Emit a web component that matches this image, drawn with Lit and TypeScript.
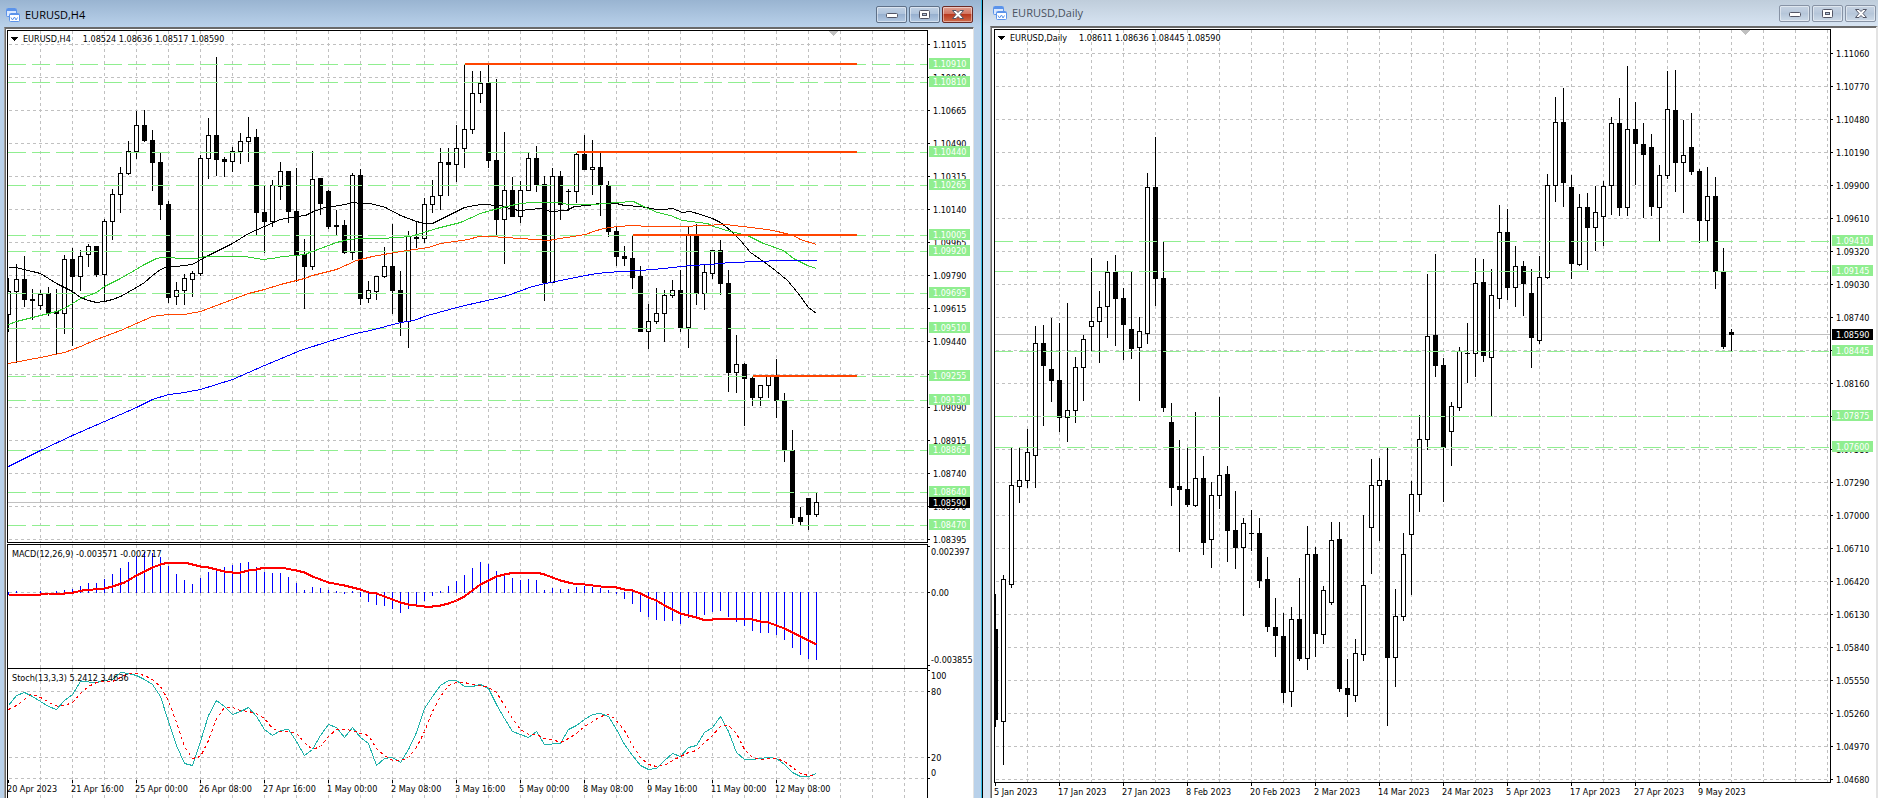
import { LitElement, html, svg, css } from "lit";
import { customElement, property } from "lit/decorators.js";

type Point = [number, number];

interface AxisLabel {
  y: number;
  text: string;
  tick?: number;
}

interface Trend {
  points: Point[];
  color: string;
  width?: number;
  dash?: string;
}

interface Pane {
  name: string;
  title?: string;
  height?: number;
  top: number;
  grid: number[];
  gridLabels: AxisLabel[];
  labelX: number;
  candles?: number[][];
  bars?: number[];
  zero?: number;
  trends?: Trend[];
  levels?: AxisLabel[];
  rays?: Point[];
  rayEnd?: number;
  price?: AxisLabel;
}

interface Chart {
  symbol: string;
  quote: string;
  active: boolean;
  left: number;
  shift: number;
  panes: Pane[];
  dates: string[];
}

const parse = (text: string): number[][] =>
  text
    .trim()
    .split(/\s*;\s*/)
    .filter(Boolean)
    .map((row) => row.split(/[\s,]+/).map(Number));

const points = (text: string): Point[] =>
  text
    .trim()
    .split(/\s+/)
    .map((pair) => pair.split(",").map(Number) as Point);

const series = (start: number, step: number, count: number): number[] =>
  Array.from({ length: count }, (_, i) => start + i * step);

const scale = (first: number, step: number, top: number, count: number): AxisLabel[] =>
  series(0, 1, count).map((i) => ({ y: top + i * 33, text: ((first - i * step) / 100000).toFixed(5) }));

/* Each candle: high, body top, body bottom, low, 1 when it closed up. */
const H4_CANDLES = parse(`
278 291 314 331 1; 264 279 291 362 1; 256 279 299 306 0; 289 299 300 319 0; 290 294 305 309 1;
287 293 313 315 0; 289 311 313 353 0; 255 259 313 333 1; 248 259 276 345 0; 250 256 276 290 1;
244 246 254 266 1; 246 246 274 276 0; 219 221 274 301 1; 189 194 221 239 1; 167 173 194 212 1;
141 151 173 174 1; 111 125 151 158 1; 110 125 140 141 0; 130 140 162 190 0; 153 162 204 219 0;
201 204 297 302 0; 282 290 296 304 1; 274 278 290 304 1; 271 273 279 296 1; 155 158 273 275 1;
118 135 158 178 1; 57 135 159 175 0; 157 159 161 176 0; 147 151 161 171 1; 133 141 151 163 1;
117 137 141 161 1; 129 137 212 234 0; 186 212 221 252 0; 180 185 221 226 1; 162 171 186 199 1;
171 171 211 222 0; 168 211 255 281 0; 239 254 266 308 0; 151 179 266 269 1; 178 178 203 214 0;
190 191 226 228 0; 210 225 226 234 0; 220 225 252 253 0; 173 175 252 259 1; 169 175 298 304 0;
281 290 298 302 1; 276 276 291 299 1; 247 266 276 277 1; 224 266 290 313 0; 271 290 321 335 0;
231 236 321 347 1; 222 237 238 247 0; 198 204 238 242 1; 180 196 204 212 1; 148 162 195 209 1;
148 162 164 195 0; 125 148 164 181 1; 64 129 148 167 1; 71 93 129 133 1; 71 83 93 102 1;
65 83 160 167 0; 79 160 219 234 0; 132 190 219 263 1; 177 190 216 216 0; 181 190 216 222 1;
153 158 190 190 1; 146 158 184 191 0; 176 184 282 300 0; 168 176 282 282 1; 171 176 204 219 0;
189 191 191 210 0; 152 154 191 202 1; 135 154 169 169 0; 140 167 169 194 1; 153 167 184 215 0;
181 185 231 236 0; 227 231 256 265 0; 246 256 258 265 0; 235 258 277 288 0; 266 276 331 331 0;
304 321 331 348 1; 288 313 321 323 1; 290 295 313 341 1; 280 290 295 297 1; 270 290 327 331 0;
226 235 327 347 1; 224 235 293 304 0; 264 272 293 309 1; 250 250 273 278 1; 240 250 283 294 0;
270 283 372 391 0; 335 364 372 392 1; 363 364 378 425 0; 377 378 397 405 0; 385 385 397 405 1;
376 376 385 397 1; 359 376 400 417 0; 393 400 450 461 0; 430 450 517 523 0; 507 517 521 524 0;
498 498 514 529 0; 492 502 514 516 1;`);

const DAILY_CANDLES = parse(`
594 629 719 726 0; 575 579 721 764 1; 447 485 584 587 1; 447 480 486 502 1; 429 452 480 487 1;
326 343 455 487 1; 325 343 365 425 0; 318 369 380 401 0; 323 380 417 431 0; 303 410 417 441 1;
357 367 410 422 1; 335 339 367 400 1; 258 321 326 350 1; 291 307 321 362 1; 261 272 306 337 1;
255 272 298 345 0; 288 298 324 359 0; 272 329 348 358 0; 317 331 347 400 1; 173 187 333 343 1;
137 187 278 305 0; 242 278 407 411 0; 403 422 487 505 0; 440 486 489 551 0; 447 489 504 506 0;
412 478 505 506 1; 456 478 542 554 0; 482 495 539 567 1; 397 475 495 508 1; 466 474 530 561 0;
491 530 547 568 0; 518 523 547 615 1; 510 533 533 550 0; 518 533 580 587 0; 557 579 626 631 0;
598 627 635 656 0; 613 636 692 702 0; 607 619 691 706 1; 578 619 658 660 0; 526 554 658 669 1;
547 554 633 656 0; 586 590 634 643 1; 522 540 602 604 1; 522 539 688 691 0; 659 688 694 716 0;
639 653 695 701 1; 515 585 654 660 1; 459 485 527 573 1; 458 480 485 540 1; 447 480 657 725 0;
589 616 657 686 1; 533 554 616 620 1; 481 494 534 594 1; 415 439 494 511 1; 274 336 439 449 1;
254 335 365 376 0; 358 365 447 501 0; 402 406 431 465 1; 347 351 407 410 1; 323 353 353 382 0;
258 283 353 376 1; 259 282 355 361 0; 269 295 357 415 1; 205 232 298 308 1; 209 232 287 299 0;
246 266 287 306 1; 261 266 283 315 0; 269 293 337 367 0; 256 277 340 343 1; 174 185 277 278 1;
97 122 185 201 1; 88 122 182 206 0; 175 187 263 278 0; 194 207 264 265 1; 193 207 227 269 0;
186 212 227 250 1; 181 186 216 245 1; 117 123 185 214 1; 98 123 207 215 0; 66 129 207 215 1;
102 129 143 184 0; 123 144 154 217 0; 134 147 206 215 0; 165 175 207 240 1; 71 109 175 178 1;
70 110 162 191 0; 120 155 162 212 1; 113 147 171 174 0; 169 171 220 242 0; 167 196 220 240 1;
177 196 271 288 0; 248 272 346 348 0; 329 332 334 350 0;`);

const MACD_BARS = [
  -3, 1, 0, 0, 1, 0, 1, 2, 3, 6, 9, 9, 13, 18, 24, 30, 36, 40, 39, 35, 26, 18, 12, 8, 14, 20, 23, 25, 27, 29, 30,
  25, 20, 19, 19, 15, 9, 2, 5, 4, 2, 1, -2, 1, -5, -10, -13, -14, -17, -21, -17, -12, -9, -4, 1, 6, 11, 17, 24, 30,
  28, 21, 17, 14, 12, 13, 12, 2, 4, 3, 3, 5, 6, 5, 4, 2, -2, -7, -12, -20, -25, -28, -29, -29, -32, -26, -25, -23,
  -20, -19, -25, -30, -34, -39, -41, -41, -43, -48, -56, -63, -67, -68,
];

const MA_BLUE = points(`8,466 20,460 40,450 72,435 104,421 136,407 152,399 168,394 178,393 200,389 232,379 264,365
300,350 328,341 355,333 370,330 400,322 413,320 427,315 460,306 500,297 510,294 532,286 545,283 560,280 580,276
596,273 620,271 640,270 663,268 690,265 710,264 730,262 760,261 778,260 816,260`);

const MA_ORANGE = points(`8,363 24,360 40,357 64,352 80,346 96,339 120,330 136,323 152,316 168,314 184,314 200,311
216,305 232,299 248,293 264,289 280,284 296,280 304,278 312,275 336,269 356,260 372,256 400,251 428,247 440,243
468,239 478,236 490,236 520,238 548,240 566,237 585,234 593,231 603,228 617,226 633,225 647,226 683,226 703,225
725,224 742,226 767,229 777,231 793,235 800,239 816,244`);

const MA_GREEN = points(`8,324 16,321 24,319 40,315 56,311 64,308 80,298 96,292 104,286 120,278 134,270 144,264
156,258 162,257 168,257 180,258 196,258 205,256 245,256 262,259 272,258 282,256 296,255 304,254 320,248 336,242
348,239 360,238 380,238 398,237 410,236 420,233 436,228 460,222 480,213 490,210 506,206 520,203 532,202 560,202
567,204 593,204 617,202 633,201 643,206 657,212 670,215 682,220 707,223 713,226 730,231 747,235 763,243 783,250
793,258 807,265 816,268`);

const MA_BLACK = points(`8,267 16,267 23,269 32,271 40,273 48,278 56,283 64,287 72,291 80,297 88,300 96,302 104,301
112,299 120,296 136,287 144,282 152,275 160,269 165,267 176,266 192,264 204,257 216,251 232,243 248,233 264,226
280,219 296,216 305,215 313,211 324,207 332,206 345,204 352,202 360,203 370,203 385,207 400,215 416,221 424,223
432,223 448,215 464,207 480,204 500,205 512,209 520,210 540,208 550,211 566,210 574,206 588,205 598,203 616,203
624,205 640,206 656,209 664,209 672,208 682,212 690,211 700,214 712,218 720,222 730,230 740,240 750,252 763,261
775,270 787,280 797,292 808,307 816,313`);

const MACD_SIGNAL = points(`8,594 40,594 48,593 64,593 73,592 82,590 104,588 112,586 124,582 136,575 144,571 152,567
160,564 168,562 184,562 192,564 200,566 208,567 216,569 224,571 232,572 240,572 248,570 256,569 264,567 280,567
296,570 304,572 312,576 328,582 344,585 360,589 368,592 376,593 384,596 392,599 400,602 408,604 416,605 424,606
432,606 440,605 448,603 456,600 464,596 472,590 480,584 496,576 504,574 514,572 536,572 544,574 552,577 560,580
572,583 584,584 600,586 616,587 624,589 632,590 640,593 648,597 656,600 664,605 672,609 680,613 688,615 696,617
702,619 712,619 718,618 746,618 752,619 760,621 768,622 776,625 784,628 792,632 800,636 808,640 816,644`);

const STOCH_MAIN = points(`8,705 16,695 24,692 32,696 40,701 48,706 56,709 64,700 72,694 80,681 96,682 104,680 112,679
120,672 128,673 136,675 144,679 152,684 160,696 168,721 176,745 184,763 192,765 200,741 208,715 216,700 224,706
232,714 240,711 248,707 256,716 264,729 272,735 280,730 288,729 296,741 304,755 312,749 320,735 328,724 336,727
344,737 352,727 360,737 368,743 376,765 384,758 392,757 400,762 408,749 416,732 424,708 432,696 440,685 448,680
456,680 464,686 472,686 480,684 488,688 496,704 504,718 512,731 520,734 528,737 536,731 544,744 560,743 568,729
576,725 584,719 592,714 600,713 608,716 616,729 624,744 632,755 640,765 648,769 656,768 664,760 672,753 680,756
688,747 696,745 704,732 712,727 720,716 728,731 736,752 744,759 752,759 760,758 768,757 776,758 784,764 792,772
800,776 808,776 816,773`);

const STOCH_SIGNAL = points(`8,709 16,705 24,699 30,694 36,695 44,699 50,703 58,706 64,705 72,702 80,693 88,686 96,682
104,681 112,681 120,677 128,673 136,673 144,675 152,679 160,686 168,700 176,722 184,746 192,758 200,756 208,740
216,718 224,707 232,707 240,710 248,711 256,713 264,718 272,728 280,731 288,731 296,733 304,742 312,749 320,746
328,736 336,729 344,729 352,730 360,733 368,735 376,748 384,755 392,760 400,760 408,757 416,747 424,731 432,711
440,696 448,685 456,682 464,682 472,684 480,685 488,687 496,692 504,705 512,718 520,729 528,734 536,734 544,738
552,739 560,742 568,738 576,733 584,726 592,721 600,716 608,714 614,718 624,730 632,745 640,757 648,764 656,766
664,765 672,760 680,756 688,752 696,750 704,742 712,735 720,726 728,725 736,733 744,749 752,757 760,759 768,758
776,758 784,761 792,767 800,773 808,775 814,775`);

const H4_LEVELS: AxisLabel[] = [
  { y: 64, text: "1.10910" },
  { y: 82, text: "1.10810" },
  { y: 152, text: "1.10440" },
  { y: 185, text: "1.10265" },
  { y: 235, text: "1.10005" },
  { y: 251, text: "1.09920" },
  { y: 293, text: "1.09695" },
  { y: 328, text: "1.09510" },
  { y: 376, text: "1.09255" },
  { y: 400, text: "1.09130" },
  { y: 450, text: "1.08865" },
  { y: 492, text: "1.08640" },
  { y: 525, text: "1.08470" },
];

const H4_SCALE = scale(111015, 175, 44, 16).map((label, i) =>
  i < 14 ? label : { ...label, text: i === 14 ? "1.08570" : "1.08395" }
);

const H4: Chart = {
  symbol: "EURUSD,H4",
  quote: "1.08524 1.08636 1.08517 1.08590",
  active: true,
  left: 8,
  shift: 99,
  dates: [
    "20 Apr 2023", "21 Apr 16:00", "25 Apr 00:00", "26 Apr 08:00", "27 Apr 16:00", "1 May 00:00", "2 May 08:00",
    "3 May 16:00", "5 May 00:00", "8 May 08:00", "9 May 16:00", "11 May 00:00", "12 May 08:00",
  ],
  panes: [
    {
      name: "Price",
      top: 31,
      grid: H4_SCALE.map((label) => label.y),
      gridLabels: H4_SCALE,
      labelX: 5,
      candles: H4_CANDLES,
      levels: H4_LEVELS,
      rays: [[465, 63], [577, 151], [633, 234], [753, 375]],
      rayEnd: 857,
      price: { y: 502, text: "1.08590" },
      trends: [
        { points: MA_BLACK, color: "#000" },
        { points: MA_GREEN, color: "#32cd32" },
        { points: MA_ORANGE, color: "#ff4500" },
        { points: MA_BLUE, color: "#00f" },
      ],
    },
    {
      name: "MACD",
      title: "MACD(12,26,9) -0.003571 -0.002717",
      height: 123,
      top: 545,
      grid: [592],
      gridLabels: [
        { y: 551, text: "0.002397", tick: 546 },
        { y: 592, text: "0.00" },
        { y: 659, text: "-0.003855", tick: 665 },
      ],
      labelX: 3,
      bars: MACD_BARS,
      zero: 592,
      trends: [{ points: MACD_SIGNAL, color: "#f00", width: 2 }],
    },
    {
      name: "Stochastic",
      title: "Stoch(13,3,3) 5.2412 3.4636",
      height: 112,
      top: 669,
      grid: [691, 757, 778],
      gridLabels: [
        { y: 675, text: "100", tick: 670 },
        { y: 691, text: "80" },
        { y: 757, text: "20" },
        { y: 772, text: "0", tick: 778 },
      ],
      labelX: 3,
      trends: [
        { points: STOCH_MAIN, color: "#20b2aa" },
        { points: STOCH_SIGNAL, color: "#f00", dash: "3 3" },
      ],
    },
  ],
};

const DAILY_SCALE = scale(111060, 290, 53, 23);

const DAILY: Chart = {
  symbol: "EURUSD,Daily",
  quote: "1.08611 1.08636 1.08445 1.08590",
  active: false,
  left: 995,
  shift: 90,
  dates: [
    "5 Jan 2023", "17 Jan 2023", "27 Jan 2023", "8 Feb 2023", "20 Feb 2023", "2 Mar 2023", "14 Mar 2023",
    "24 Mar 2023", "5 Apr 2023", "17 Apr 2023", "27 Apr 2023", "9 May 2023",
  ],
  panes: [
    {
      name: "Price",
      top: 30,
      grid: DAILY_SCALE.map((label) => label.y),
      gridLabels: DAILY_SCALE,
      labelX: 5,
      candles: DAILY_CANDLES,
      price: { y: 334, text: "1.08590" },
      levels: [
        { y: 241, text: "1.09410" },
        { y: 271, text: "1.09145" },
        { y: 351, text: "1.08445" },
        { y: 416, text: "1.07875" },
        { y: 447, text: "1.07600" },
      ],
    },
  ],
};

@customElement("chart-window")
class ChartWindow extends LitElement {
  @property({ attribute: false }) chart!: Chart;

  static styles = css`
    :host {
      display: flex;
      min-width: 0;
      min-height: 0;
    }
    .window {
      flex: 1;
      min-width: 0;
      display: flex;
      flex-direction: column;
      background: #d7e4f2;
      padding: 0 0 0 7px;
    }
    .active {
      background: #b9d1ea;
      border-right: 1px solid #000;
      box-shadow: inset -1px 0 #35bfe6;
      padding: 0 8px 0 4px;
    }
    .bar {
      height: 26px;
      flex: none;
      box-sizing: border-box;
      display: flex;
      align-items: center;
      gap: 5px;
      margin-left: -7px;
      padding: 0 2px 0 10px;
      background: linear-gradient(#bfcddb, #d7e4f2);
      color: #4a5260;
    }
    .active .bar {
      height: 27px;
      margin: 0 -7px 0 -4px;
      padding: 2px 8px 0 6px;
      background: linear-gradient(#99b4d1, #b9d1ea);
      color: #000;
    }
    .logo {
      width: 14px;
      height: 14px;
      flex: none;
    }
    .name {
      flex: 1;
      margin: 0;
      font: 400 11px/16px "Open Sans", "Noto Sans", sans-serif;
    }
    .controls {
      display: flex;
      gap: 2px;
    }
    .control {
      width: 31px;
      height: 17px;
      padding: 0;
      border: 1px solid #8793a5;
      border-radius: 2px;
      box-shadow: inset 0 0 0 1px rgba(255, 255, 255, 0.45);
      background: linear-gradient(#c6d3e2, #b7c7da 50%, #b5c6d9 50%, #cddae8);
      display: grid;
      place-items: center;
    }
    .active .control {
      border-color: #5f7188;
      background: linear-gradient(#c1d1e4, #adc2db 50%, #97b0cf 50%, #b4cae3);
    }
    .active .close {
      border-color: #6b2a25;
      background: linear-gradient(#e0a092, #d0705c 50%, #b9391f 50%, #cf6a4a);
    }
    .control svg {
      display: block;
    }
    .client {
      flex: 1;
      min-height: 0;
      display: flex;
      flex-direction: column;
      gap: 1px;
      padding: 2px 0 0 3px;
      background: #fff;
      border: 1px solid #a0a0a0;
      border-top-color: #696969;
      border-right: 2px solid #e3e3e3;
      border-bottom: 0;
      box-shadow: inset 1px 1px #696969;
    }
    .active .client {
      padding: 2px 0 0 2px;
      border-right-width: 1px;
    }
    .pane {
      flex: none;
      display: grid;
      grid-template-columns: minmax(0, 1fr) 45px;
    }
    .main {
      flex: 1;
      min-height: 0;
    }
    .plot {
      display: block;
      box-sizing: border-box;
      width: 100%;
      height: 100%;
      border: 1px solid #000;
      background: #fff;
      shape-rendering: crispEdges;
      overflow: hidden;
    }
    .scale {
      display: block;
      width: 100%;
      height: 100%;
      shape-rendering: crispEdges;
      overflow: visible;
    }
    .dates {
      display: block;
      width: 100%;
      height: 15px;
      flex: none;
      margin-top: -1px;
      shape-rendering: crispEdges;
    }
    .active .dates {
      height: 18px;
    }
    text {
      font: 9px "DejaVu Sans Condensed", "DejaVu Sans", sans-serif;
      font-stretch: condensed;
      fill: #000;
    }
    .tag {
      fill: #fff;
    }
  `;

  private drawCandle(candle: number[], i: number) {
    const [high, top, bottom, low, up] = candle;
    const x = this.chart.left + i * 8;
    return svg`
      <rect x=${x} y=${high} width="1" height=${low - high + 1}></rect>
      <rect x=${x - 2} y=${top} width="5" height=${bottom - top + 1}></rect>
      ${up ? svg`<rect x=${x - 1} y=${top + 1} width="3" height=${bottom - top - 1} fill="#fff"></rect>` : ""}`;
  }

  private drawPlot(pane: Pane, first: boolean) {
    const { left, shift, symbol, quote } = this.chart;
    const end = pane.rayEnd ?? 0;
    return html`
      <svg class="plot" role="img" aria-label="${symbol} ${pane.name}">
        <g stroke="#c0c0c0" stroke-dasharray="3 3">
          ${series(32, 32, 80).map((x) => svg`<line x1=${x + 0.5} x2=${x + 0.5} y1="0" y2="100%"></line>`)}
          ${pane.grid.map((y) => {
            const at = y - pane.top + 0.5;
            return svg`<line x1="1" x2="100%" y1=${at} y2=${at}></line>`;
          })}
        </g>
        ${pane.price
          ? svg`<rect x="0" y=${pane.price.y - pane.top} width="100%" height="1" fill="#c0c0c0"></rect>`
          : ""}
        <g transform="translate(${-left} ${-pane.top})">
          ${(pane.candles ?? []).map((candle, i) => this.drawCandle(candle, i))}
          ${(pane.bars ?? []).map((bar, i) =>
            bar === 0
              ? ""
              : svg`<rect x=${left + i * 8} y=${pane.zero! - Math.max(bar, 0)} width="1"
                  height=${Math.abs(bar) + (bar > 0 ? 1 : 0)} fill="#00f"></rect>`
          )}
        </g>
        <g stroke="#90ee90" stroke-dasharray="18 6">
          ${(pane.levels ?? []).map(({ y }) => {
            const at = y - pane.top + 0.5;
            return svg`<line x1="0" x2="100%" y1=${at} y2=${at}></line>`;
          })}
        </g>
        <g transform="translate(${0.5 - left} ${0.5 - pane.top})" fill="none">
          ${(pane.trends ?? []).map(
            (trend) => svg`<polyline points=${trend.points.join(" ")} stroke=${trend.color}
              stroke-width=${trend.width ?? 1} stroke-dasharray=${trend.dash ?? "none"}></polyline>`
          )}
        </g>
        ${(pane.rays ?? []).map(
          ([x, y]) =>
            svg`<rect x=${x - left} y=${y - pane.top} width=${end - x} height="2" fill="#ff4500"></rect>`
        )}
        ${first
          ? svg`
            <path d="M3 6h7l-3.5 4z"></path>
            <text x="15" y="11">${symbol}<tspan dx="12">${quote}</tspan></text>
            <svg x="100%" overflow="visible"><path d=${`M${-shift} 0h10l-5 5z`} fill="#c0c0c0"></path></svg>`
          : svg`<text x="4" y="12">${pane.title}</text>`}
      </svg>`;
  }

  private drawScale(pane: Pane) {
    const base = pane.top - 1;
    return html`
      <svg class="scale" role="img" aria-label="${pane.name} scale">
        ${pane.gridLabels.map(
          ({ y, text, tick }) => svg`
            <rect x="0" y=${(tick ?? y) - base} width="2" height="1"></rect>
            <text x=${pane.labelX} y=${y - base + 4}>${text}</text>`
        )}
        ${(pane.levels ?? []).map(
          ({ y, text }) => svg`
            <rect x="1" y=${y - base - 6} width="41" height="11" fill="#90ee90"></rect>
            <text class="tag" x=${pane.labelX} y=${y - base + 3}>${text}</text>`
        )}
        ${pane.price
          ? svg`
            <rect x="1" y=${pane.price.y - base - 5} width="41" height="11"></rect>
            <text class="tag" x=${pane.labelX} y=${pane.price.y - base + 4}>${pane.price.text}</text>`
          : ""}
      </svg>`;
  }

  render() {
    const { symbol, active, panes, dates } = this.chart;
    return html`
      <section class="window ${active ? "active" : ""}" aria-label=${symbol}>
        <header class="bar">
          <svg class="logo" viewBox="0 0 14 14" aria-hidden="true">
            <rect x="0.5" y="0.5" width="10" height="8" rx="1" fill="#dbe9ff" stroke="#5b93ea"></rect>
            <path d="M1 2h9" stroke="#5b93ea" stroke-width="2"></path>
            <rect x="3.5" y="5.5" width="10" height="8" rx="1" fill="#fff" stroke="#5b93ea"></rect>
            <path d="M4 6.500h9" stroke="#5b93ea" stroke-width="1"></path>
            <path d="M5 9.500l1.500 2.500 2-3 1.500 3 1.500-2.500" fill="none" stroke="#5b93ea"></path>
          </svg>
          <h2 class="name">${symbol}</h2>
          <div class="controls">
            <button class="control" aria-label="Minimize">
              <svg width="12" height="9"><rect x="0.5" y="3.5" width="11" height="4" rx="1" fill="#fff" stroke="#535666"></rect></svg>
            </button>
            <button class="control" aria-label="Restore">
              <svg width="12" height="9">
                <rect x="0.5" y="0.5" width="10" height="8" rx="1" fill="#fff" stroke="#535666"></rect>
                <rect x="3.5" y="3.5" width="4" height="2" fill="#b3c6dc" stroke="#535666"></rect>
              </svg>
            </button>
            <button class="control close" aria-label="Close">
              <svg width="12" height="9">
                <path d="M0.500 0.500h3.500l2 2 2-2h3.500l-3.500 4 3.500 4h-3.500l-2-2-2 2h-3.500l3.500-4z" fill="#fff" stroke="#535666"></path>
              </svg>
            </button>
          </div>
        </header>
        <div class="client">
          ${panes.map(
            (pane, i) => html`
              <div class="pane ${i === 0 ? "main" : ""}" style=${pane.height ? `height:${pane.height}px` : ""}>
                ${this.drawPlot(pane, i === 0)} ${this.drawScale(pane)}
              </div>`
          )}
          <svg class="dates" role="img" aria-label="Time scale">
            ${dates.map(
              (date, i) => svg`
                <rect x=${1 + i * 64} y="0" width="1" height="3"></rect>
                <text x=${i * 64} y="12">${date}</text>`
            )}
          </svg>
        </div>
      </section>`;
  }
}

@customElement("app-root")
class AppRoot extends LitElement {
  static styles = css`
    :host {
      display: grid;
      grid-template-columns: minmax(0, 983fr) minmax(0, 895fr);
      grid-template-rows: minmax(0, 1fr);
      height: 100vh;
      overflow: hidden;
    }
  `;

  render() {
    return html`
      <chart-window .chart=${H4}></chart-window>
      <chart-window .chart=${DAILY}></chart-window>`;
  }
}
